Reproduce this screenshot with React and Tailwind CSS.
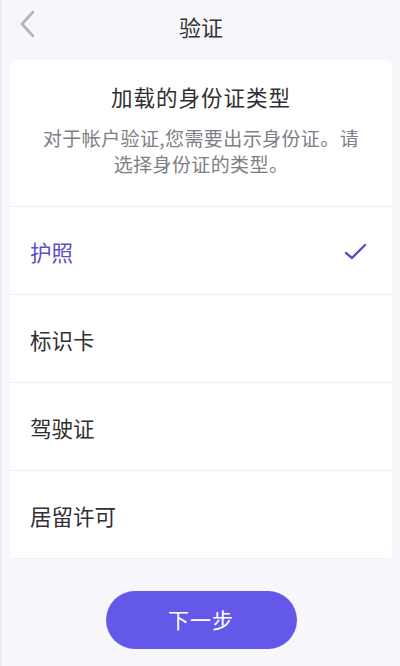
const font = { fontFamily: '"Noto Sans CJK SC", "Noto Sans", sans-serif' };

const types = ["护照", "标识卡", "驾驶证", "居留许可"];

export default function App() {
  const selected = 0;
  return (
    <div
      className="h-[666px] w-[400px] bg-[#f7f7fb] border-l-2 border-[#ececf0] flex flex-col overflow-hidden"
      style={font}
    >
      <div className="relative h-[60px] flex items-center justify-center">
        <svg
          className="absolute left-[16px] top-[10px]"
          width="20"
          height="28"
          viewBox="0 0 20 28"
          fill="none"
        >
          <path d="M15 2 L4 14 L15 26" stroke="#b4b4bc" strokeWidth="2.6" strokeLinecap="round" strokeLinejoin="round" />
        </svg>
        <span className="text-[22px] text-[#333] -mt-[8px]">验证</span>
      </div>

      <div className="mx-[8px] flex flex-col">
        <div className="bg-white rounded-t-[6px] h-[146px] flex flex-col items-center pt-[22px]">
          <div className="text-[21.5px] text-[#2f2f33] tracking-[1px] leading-[30px]">加载的身份证类型</div>
          <div className="mt-[13px] text-[19px] leading-[26px] text-[#7e7e84] text-center px-[24px] tracking-[0.4px]">
            对于帐户验证,您需要出示身份证。请选择身份证的类型。
          </div>
        </div>
        {types.map((t, i) => (
          <div
            key={t}
            className="bg-white h-[88px] border-t border-[#eeeef2] flex items-center justify-between pl-[20px] pr-[24px]"
          >
            <span
              className={
                i === selected
                  ? "text-[21.5px] text-[#5b4fc4] mt-[4px]"
                  : "text-[21.5px] text-[#303034] mt-[4px]"
              }
            >
              {t}
            </span>
            {i === selected && (
              <svg width="24" height="18" viewBox="0 0 24 18" fill="none" className="mt-[2px]">
                <path d="M2 10 L8 15 L21 2" stroke="#5b4fc4" strokeWidth="2.4" strokeLinecap="round" strokeLinejoin="round" />
              </svg>
            )}
          </div>
        ))}
        <div className="border-t border-[#eeeef2] mx-[4px]" />
      </div>

      <div className="flex justify-center mt-[32px]">
        <button className="w-[191px] h-[58px] rounded-full bg-[#6458e8] text-white text-[21px] tracking-[1px]">
          下一步
        </button>
      </div>
    </div>
  );
}
